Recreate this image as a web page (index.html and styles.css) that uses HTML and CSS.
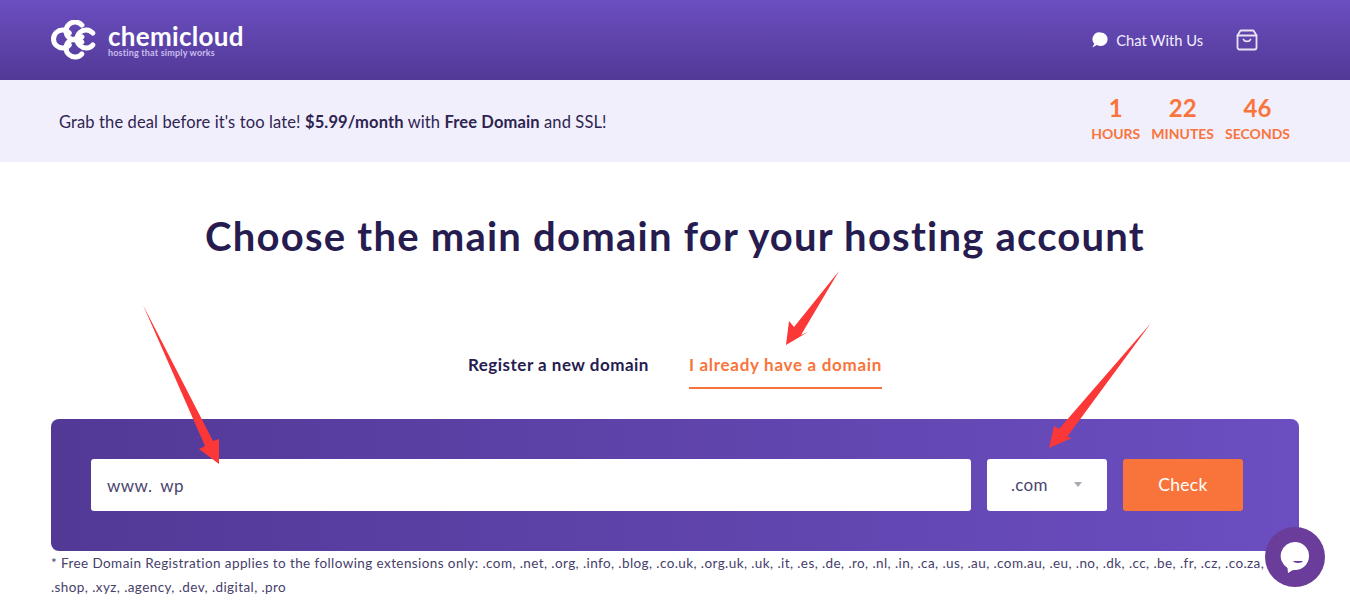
FILE: index.html
```html
<!DOCTYPE html>
<html lang="en">
<head>
  <meta charset="UTF-8">
  <title>ChemiCloud - Choose a domain</title>
  <link rel="stylesheet" href="styles.css">
</head>
<body>

  <header class="topbar">
    <a class="logo" href="#">
      <svg class="logo-mark" width="46" height="40" viewBox="0 0 46 40" fill="none" stroke="#fff" stroke-width="5" stroke-linecap="round">
        <path d="M18.400 13.200A9 9 0 1 0 18.400 24.800"/>
        <path d="M30.900 5.200A9 9 0 1 0 30.900 16.800"/>
        <path d="M41.900 13.200A9 9 0 1 0 41.900 24.800"/>
        <path d="M30.900 22.200A9 9 0 1 0 30.900 33.800"/>
      </svg>
      <span class="logo-text">
        <span class="logo-name">chemicloud</span>
        <span class="logo-tag">hosting that simply works</span>
      </span>
    </a>
    <nav class="topnav">
      <a class="chat-link" href="#">
        <svg width="16" height="16" viewBox="0 0 16 16" fill="#fff"><path d="M8.800 0.500a6.800 6.800 0 0 1 0 13.600c-1.500 0-2.800-.4-3.900-1.100L0.700 15.300c-.2.100-.3 0-.2-.2l1.800-3.400A6.800 6.800 0 0 1 8.800 0.500z"/></svg>
        Chat With Us
      </a>
      <a class="cart-link" href="#">
        <svg width="22" height="22" viewBox="0 0 22 22" fill="none" stroke="#e8e3f6" stroke-width="1.800" stroke-linecap="round" stroke-linejoin="round"><path d="M4.500 1.500h13l3 5v12a2 2 0 0 1-2 2h-15a2 2 0 0 1-2-2v-12z"/><path d="M1.500 6.500h19"/><path d="M7.500 10.500c1 2.600 6 2.600 7 0"/></svg>
      </a>
    </nav>
  </header>

  <section class="promo">
    <p class="promo-text">Grab the deal before it's too late! <b>$5.99/month</b> with <b>Free Domain</b> and SSL!</p>
    <div class="countdown">
      <div class="count"><strong>1</strong><span>HOURS</span></div>
      <div class="count"><strong>22</strong><span>MINUTES</span></div>
      <div class="count"><strong>46</strong><span>SECONDS</span></div>
    </div>
  </section>

  <main>
    <h1>Choose the main domain for your hosting account</h1>

    <div class="tabs">
      <a class="tab" href="#">Register a new domain</a>
      <a class="tab active" href="#">I already have a domain</a>
    </div>

    <form class="domain-panel">
      <div class="domain-input"><span>www.</span><span>wp</span></div>
      <div class="tld-select"><span>.com</span><i class="caret"></i></div>
      <button class="check-btn" type="button">Check</button>
    </form>

    <p class="note">* Free Domain Registration applies to the following extensions only: .com, .net, .org, .info, .blog, .co.uk, .org.uk, .uk, .it, .es, .de, .ro, .nl, .in, .ca, .us, .au, .com.au, .eu, .no, .dk, .cc, .be, .fr, .cz, .co.za,<br>.shop, .xyz, .agency, .dev, .digital, .pro</p>
  </main>

  <!-- annotation arrows drawn over the page -->
  <svg class="arrows" width="1350" height="600" viewBox="0 0 1350 600" fill="#fb3737">
    <polygon points="143,305 213,441 219,439 219,464 199,449 205,446"/>
    <polygon points="839,271 801,335 808,332 786,345 789,321 794,327"/>
    <polygon points="1151,323 1067,437 1072,438 1049,448 1054,426 1059,429"/>
  </svg>

  <a class="chat-bubble" href="#">
    <svg width="30" height="32" viewBox="0 0 30 32"><path d="M15 1a14 14 0 0 1 0 28c-1.600 0-3 .2-4.500 1.500L8 32l-.5-5A14 14 0 0 1 15 1z" fill="#fff"/><path d="M13 20h10c-1 2.600-9 2.600-10 0z" fill="#6a3d9a"/></svg>
  </a>

</body>
</html>
```

FILE: styles.css
```css
:root {
  --purple-dark: #523996;
  --purple: #6b4ec0;
  --orange: #f9743b;
  --navy: #261c4f;
  --font-sans: Lato, "Open Sans", sans-serif;
}
*, *::before, *::after {
  box-sizing: border-box;
  margin: 0;
  padding: 0;
}
html, body {
  height: 600px;
  overflow: hidden;
}
body {
  position: relative;
  font-family: var(--font-sans);
  background: #fff;
  color: var(--navy);
}
a {
  color: inherit;
  text-decoration: none;
}

/* top bar */
.topbar {
  height: 80px;
  padding: 0 92px 0 51px;
  display: flex;
  align-items: center;
  justify-content: space-between;
  background: linear-gradient(180deg, var(--purple) 0%, var(--purple-dark) 100%);
  color: #fff;
}
.logo {
  display: flex;
  align-items: center;
  gap: 11px;
}
.logo-mark {
  display: block;
}
.logo-text {
  display: flex;
  flex-direction: column;
  margin-top: 1px;
}
.logo-name {
  font-size: 26px;
  line-height: 24px;
  font-weight: 700;
  letter-spacing: 0.300px;
}
.logo-tag {
  font-size: 9px;
  line-height: 10px;
  font-weight: 700;
  color: #c9bdec;
  letter-spacing: 0.180px;
}
.topnav {
  display: flex;
  align-items: center;
  gap: 33px;
}
.chat-link {
  display: flex;
  align-items: center;
  gap: 8px;
  font-size: 14.700px;
  color: #f2effd;
}
.cart-link {
  display: flex;
}

/* promo strip */
.promo {
  height: 82px;
  padding: 0 60px 0 59px;
  display: flex;
  align-items: center;
  justify-content: space-between;
  background: #f2effd;
}
.promo-text {
  padding-top: 2px;
  font-size: 16.500px;
  letter-spacing: 0.120px;
  color: #2d2550;
}
.countdown {
  display: flex;
  gap: 11px;
  padding-bottom: 2px;
  color: var(--orange);
}
.count {
  display: flex;
  flex-direction: column;
  align-items: center;
}
.count strong {
  font-size: 24px;
  line-height: 28px;
  font-weight: 700;
}
.count span {
  font-size: 14px;
  line-height: 24px;
  font-weight: 700;
}

/* main */
main {
  padding: 0 51px;
}
h1 {
  margin-top: 48px;
  font-size: 40px;
  line-height: 52px;
  font-weight: 700;
  text-align: center;
  letter-spacing: 1.230px;
}
.tabs {
  margin-top: 91px;
  display: flex;
  justify-content: center;
  gap: 40px;
}
.tab {
  padding-bottom: 10px;
  font-size: 17px;
  line-height: 24px;
  font-weight: 700;
  letter-spacing: 0.500px;
  border-bottom: 2px solid transparent;
}
.tab.active {
  letter-spacing: 0.700px;
  color: var(--orange);
  border-bottom-color: var(--orange);
}
.domain-panel {
  margin-top: 30px;
  height: 132px;
  padding: 40px;
  display: flex;
  gap: 16px;
  border-radius: 8px;
  background: linear-gradient(90deg, var(--purple-dark) 0%, var(--purple) 100%);
}
.domain-input {
  width: 880px;
  display: flex;
  align-items: center;
  gap: 8px;
  padding-left: 16px;
  font-size: 17px;
  letter-spacing: 0.400px;
  color: #4b4570;
  background: #fff;
  border-radius: 3px;
}
.tld-select {
  width: 120px;
  display: flex;
  align-items: center;
  justify-content: space-between;
  padding: 0 25px 2px 24px;
  font-size: 17px;
  letter-spacing: 0.300px;
  color: #4b4570;
  background: #fff;
  border-radius: 3px;
}
.caret {
  width: 0;
  height: 0;
  border-left: 4px solid transparent;
  border-right: 4px solid transparent;
  border-top: 5px solid #aaa8b0;
}
.check-btn {
  width: 120px;
  padding-bottom: 2px;
  border: none;
  border-radius: 3px;
  font-family: inherit;
  font-size: 17.500px;
  letter-spacing: 0.300px;
  color: #fff;
  background: var(--orange);
}
.note {
  font-size: 13.500px;
  line-height: 24px;
  letter-spacing: 0.410px;
  color: #46406a;
  white-space: nowrap;
}

/* overlays */
.arrows {
  position: absolute;
  left: 0;
  top: 0;
  pointer-events: none;
}
.chat-bubble {
  position: absolute;
  left: 1265px;
  top: 527px;
  width: 60px;
  height: 60px;
  display: flex;
  align-items: center;
  justify-content: center;
  border-radius: 50%;
  background: #6a3d9a;
}
```
